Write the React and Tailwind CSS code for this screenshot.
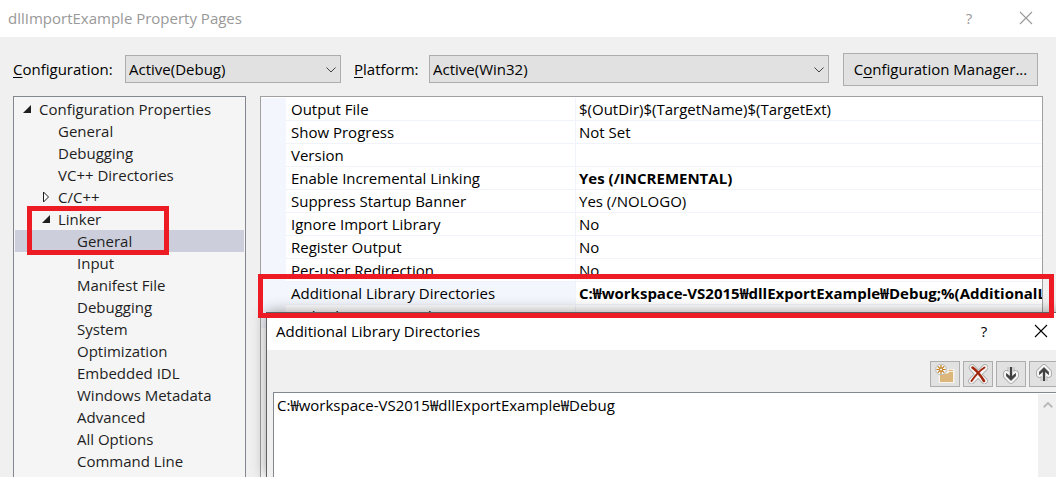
import React from "react";

const treeItems = [
  { label: "Configuration Properties", level: 0, state: "open" },
  { label: "General", level: 1 },
  { label: "Debugging", level: 1 },
  { label: "VC++ Directories", level: 1 },
  { label: "C/C++", level: 1, state: "closed" },
  { label: "Linker", level: 1, state: "open" },
  { label: "General", level: 2, selected: true },
  { label: "Input", level: 2 },
  { label: "Manifest File", level: 2 },
  { label: "Debugging", level: 2 },
  { label: "System", level: 2 },
  { label: "Optimization", level: 2 },
  { label: "Embedded IDL", level: 2 },
  { label: "Windows Metadata", level: 2 },
  { label: "Advanced", level: 2 },
  { label: "All Options", level: 2 },
  { label: "Command Line", level: 2 },
];

const indents = ["pl-1.5", "pl-[25px]", "pl-11"];

const properties = [
  { name: "Output File", value: "$(OutDir)$(TargetName)$(TargetExt)" },
  { name: "Show Progress", value: "Not Set" },
  { name: "Version", value: "" },
  { name: "Enable Incremental Linking", value: "Yes (/INCREMENTAL)", bold: true },
  { name: "Suppress Startup Banner", value: "Yes (/NOLOGO)" },
  { name: "Ignore Import Library", value: "No" },
  { name: "Register Output", value: "No" },
  { name: "Per-user Redirection", value: "No" },
  {
    name: "Additional Library Directories",
    value: "C:₩workspace-VS2015₩dllExportExample₩Debug;%(AdditionalLibraryDirectories)",
    bold: true,
    selected: true,
  },
  { name: "Link Library Dependencies", value: "Yes" },
];

function Expander({ state }) {
  return (
    <svg viewBox="0 0 12 12" className="h-3 w-3 shrink-0" aria-hidden="true">
      {state === "open" && <path d="M10 2v8H2z" fill="#1e1e1e" />}
      {state === "closed" && (
        <path d="M3.5 1v10L8.500 6z" fill="#fff" stroke="#1e1e1e" strokeWidth="1" />
      )}
    </svg>
  );
}

function Close() {
  return (
    <svg viewBox="0 0 14 14" className="h-3.5 w-3.5" fill="none" stroke="currentColor" aria-hidden="true">
      <path d="M1 1l12 12M13 1L1 13" strokeWidth="1.1" />
    </svg>
  );
}

function TitleBar({ title, className }) {
  return (
    <header className={`flex shrink-0 items-center bg-white ${className}`}>
      <h1 className="flex-1">{title}</h1>
      <button type="button" aria-label="Help" className="flex h-7 w-7 items-center justify-center">
        ?
      </button>
      <button type="button" aria-label="Close" className="ml-[29px] flex h-7 w-7 items-center justify-center">
        <Close />
      </button>
    </header>
  );
}

function DropDown({ id, value, className }) {
  return (
    <div className={`relative ${className}`}>
      <select
        id={id}
        defaultValue={value}
        className="h-7 w-full appearance-none border border-[#adadad] bg-[#e1e1e1] pl-[3px] pr-6 text-black"
      >
        <option>{value}</option>
      </select>
      <svg
        viewBox="0 0 10 6"
        className="pointer-events-none absolute right-[5px] top-3 h-1.5 w-2.5"
        fill="none"
        stroke="#404040"
        aria-hidden="true"
      >
        <path d="M.5.5L5 5 9.500.5" strokeWidth="1" />
      </svg>
    </div>
  );
}

function ToolButton({ label, children }) {
  return (
    <button
      type="button"
      aria-label={label}
      className="flex h-[26px] w-[30px] shrink-0 items-center justify-center border border-[#adadad] bg-[#e1e1e1]"
    >
      <svg viewBox="0 0 20 20" className="h-5 w-5" aria-hidden="true">
        {children}
      </svg>
    </button>
  );
}

function Arrow({ stem, head }) {
  const outline = `${stem}${head}`;
  return (
    <g fill="none" strokeLinejoin="round">
      <path d={outline} stroke="#a0a0a0" strokeWidth="6.6" />
      <path d={outline} stroke="#f6f6f6" strokeWidth="5" />
      <path d={stem} stroke="#404040" strokeWidth="2.4" />
      <path d={head} fill="#404040" stroke="#404040" strokeWidth=".8" />
    </g>
  );
}

function DirectoriesDialog() {
  return (
    <section
      aria-label="Additional Library Directories"
      className="absolute -right-2.5 bottom-0 left-[266px] top-[312px] z-10 flex flex-col border-l border-t border-[#5f6063] bg-[#f0f0f0] shadow-[0_0_14px_rgba(0,0,0,0.4)]"
    >
      <TitleBar title="Additional Library Directories" className="h-[37px] pb-0.5 pl-[9px] pr-[11px] text-black" />
      <div className="flex h-[42px] shrink-0 items-center justify-end gap-[3px] pb-[5px] pr-[7px] pt-[11px]">
        <ToolButton label="New Line">
          <path d="M4 8.500h8l1-3.500h6.500v14H3.500z" fill="#f8f4ec" />
          <path d="M5 9.500h8l1.200-1.500H18v10H5z" fill="#dcb67a" />
          <path d="M13.500 6.500H18" stroke="#dcb67a" strokeWidth="1.200" />
          <circle cx="6" cy="5.500" r="5.300" fill="#f6f6f6" stroke="#a8a8a8" strokeWidth=".7" />
          <path
            d="M6 1v9M1.500 5.500h9M2.800 2.300l6.400 6.400M9.200 2.300L2.800 8.700"
            stroke="#c27d1a"
            strokeWidth="1.200"
          />
          <circle cx="6" cy="5.500" r="1.600" fill="#f6f6f6" stroke="#c27d1a" />
        </ToolButton>
        <ToolButton label="Delete">
          <g fill="none" strokeLinecap="round" strokeLinejoin="round">
            <path d="M4 3.500L16.500 17M17 3.500L3.500 17" stroke="#a0a0a0" strokeWidth="6.400" />
            <path d="M4 3.500L16.500 17M17 3.500L3.500 17" stroke="#f6f6f6" strokeWidth="5" />
            <path d="M4.500 3.500c4 3 8.500 8.500 11.500 13.500" stroke="#a1260d" strokeWidth="2.600" />
            <path d="M16.500 3.500C11 7 7 12 3.500 17" stroke="#a1260d" strokeWidth="2" />
          </g>
        </ToolButton>
        <ToolButton label="Move Line Down">
          <Arrow stem="M10 3v11" head="M5.500 9.500V12l4.500 4.500 4.500-4.500V9.500L10 13.500z" />
        </ToolButton>
        <ToolButton label="Move Line Up">
          <Arrow stem="M10 17V6" head="M5.500 10.500V8L10 3.500 14.500 8v2.500L10 6.500z" />
        </ToolButton>
      </div>
      <div className="ml-1.5 mr-[7px] flex min-h-0 flex-1 border-l border-t border-[#828790] bg-white">
        <textarea
          aria-label="Directories"
          defaultValue="C:₩workspace-VS2015₩dllExportExample₩Debug"
          className="min-w-0 flex-1 resize-none overflow-hidden px-[3px] pt-px leading-[22px] text-black"
        />
        <div className="mt-px flex w-[21px] shrink-0 justify-center bg-[#f0f0f0] pr-0.5 pt-2">
          <svg viewBox="0 0 10 6" className="h-1.5 w-2.5" fill="none" stroke="#bcbcbc" aria-hidden="true">
            <path d="M.7 5.300L5 1l4.300 4.300" strokeWidth="2" />
          </svg>
        </div>
      </div>
    </section>
  );
}

export default function App() {
  return (
    <div className="relative flex h-screen flex-col overflow-hidden bg-[#f0f0f0] font-['Open_Sans','Noto_Sans_CJK_KR',sans-serif] text-[15px] leading-[22px] text-black">
      <TitleBar title="dllImportExample Property Pages" className="h-[37px] pb-0.5 pl-2 pr-4 text-[#999999]" />

      <div className="flex h-[59px] shrink-0 items-center px-[13px] pt-[5px]">
        <label htmlFor="configuration" className="w-28 shrink-0">
          <span className="underline underline-offset-2">C</span>onfiguration:
        </label>
        <DropDown id="configuration" value="Active(Debug)" className="w-[216px] shrink-0" />
        <label htmlFor="platform" className="ml-[13px] w-[75px] shrink-0">
          <span className="underline underline-offset-2">P</span>latform:
        </label>
        <DropDown id="platform" value="Active(Win32)" className="min-w-0 flex-1" />
        <button
          type="button"
          className="ml-3.5 mr-[5px] h-[33px] w-[195px] shrink-0 border border-[#adadad] bg-[#e1e1e1]"
        >
          C<span className="underline underline-offset-2">o</span>nfiguration Manager...
        </button>
      </div>

      <main className="flex min-h-0 flex-1 gap-3.5 px-[13px]">
        <nav
          aria-label="Configuration Properties"
          className="w-[233px] shrink-0 overflow-hidden border-x border-t border-[#828790] bg-[#f5f5f5] px-px pt-px text-[#1e1e1e]"
        >
          <ul>
            {treeItems.map((item, i) => (
              <li key={i}>
                <button
                  type="button"
                  className={`flex h-[22px] w-full items-center gap-1.5 text-left ${indents[item.level]} ${
                    item.selected ? "bg-[#cccedb]" : ""
                  }`}
                >
                  <Expander state={item.state} />
                  {item.label}
                </button>
              </li>
            ))}
          </ul>
        </nav>

        <div className="min-w-0 flex-1 overflow-hidden border-x border-t border-[#a0a0a0] bg-white pt-px">
          <table className="w-full table-fixed border-separate border-spacing-0">
            <colgroup>
              <col className="w-[25px]" />
              <col className="w-[290px]" />
              <col />
            </colgroup>
            <tbody>
              {properties.map((p) => (
                <tr key={p.name} className="h-[23px]">
                  <td className="bg-[#f3f6fc] p-0" />
                  <th
                    scope="row"
                    className={`whitespace-nowrap border-b border-r border-[#f0f3f9] py-0 pl-[5px] text-left font-normal ${
                      p.selected ? "bg-[#f3f6fc]" : ""
                    }`}
                  >
                    {p.name}
                  </th>
                  <td
                    className={`overflow-hidden whitespace-nowrap border-b border-[#f0f3f9] py-0 pl-[3px] ${
                      p.bold ? "font-bold" : ""
                    }`}
                  >
                    {p.value}
                  </td>
                </tr>
              ))}
            </tbody>
          </table>
        </div>
      </main>

      <DirectoriesDialog />

      <div className="pointer-events-none absolute left-[27px] top-[206px] z-20 h-[49px] w-[142px] border-[5px] border-[#ed1c24]" />
      <div className="pointer-events-none absolute left-[258px] right-0.5 top-[274px] z-20 h-11 border-[5px] border-[#ed1c24]" />
    </div>
  );
}
